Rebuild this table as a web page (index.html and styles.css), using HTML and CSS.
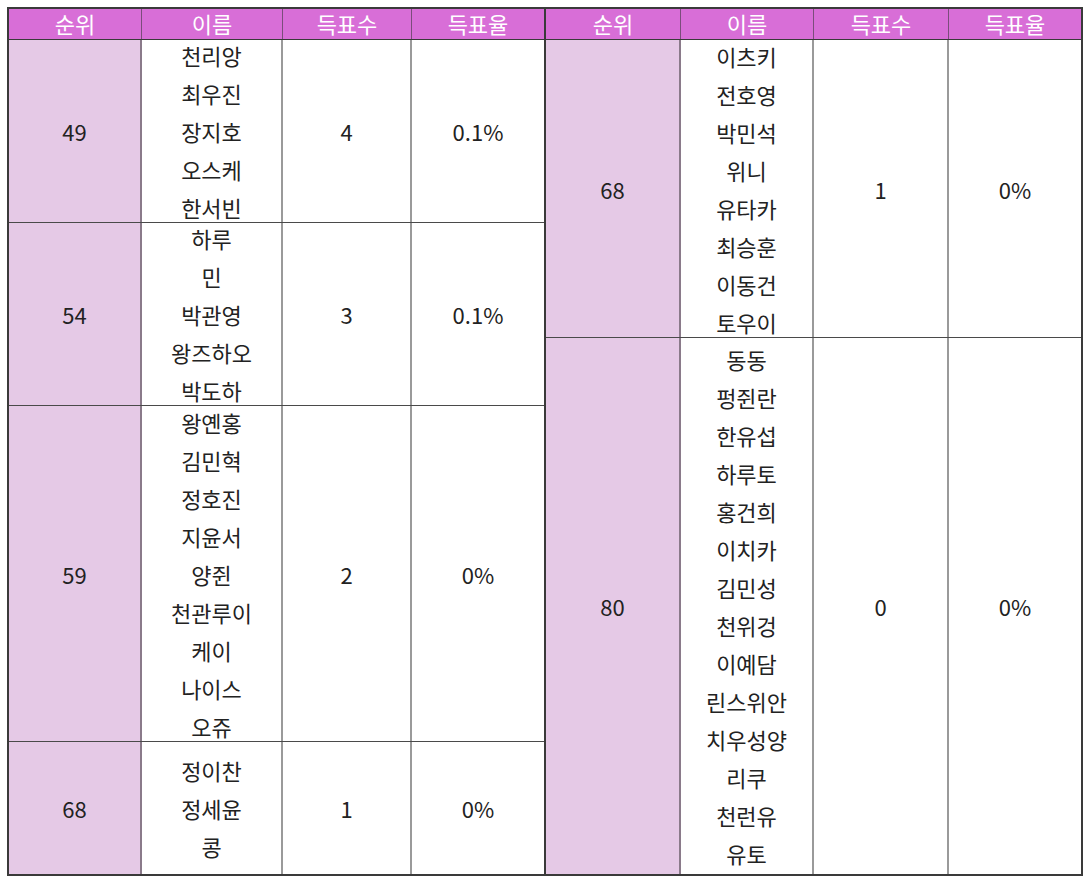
FILE: index.html
```html
<!DOCTYPE html>
<html lang="ko">
<head>
<meta charset="utf-8">
<title>득표 순위</title>
<link rel="stylesheet" href="styles.css">
</head>
<body>
<div class="wrap">
  <div class="tbl tbl-left">
    <div class="row head">
      <div class="cell">순위</div><div class="cell">이름</div><div class="cell">득표수</div><div class="cell">득표율</div>
    </div>
    <div class="row r183">
      <div class="cell rank">49</div>
      <div class="cell names"><div>천리앙</div><div>최우진</div><div>장지호</div><div>오스케</div><div>한서빈</div></div>
      <div class="cell">4</div>
      <div class="cell">0.1%</div>
    </div>
    <div class="row r183">
      <div class="cell rank">54</div>
      <div class="cell names"><div>하루</div><div>민</div><div>박관영</div><div>왕즈하오</div><div>박도하</div></div>
      <div class="cell">3</div>
      <div class="cell">0.1%</div>
    </div>
    <div class="row r336">
      <div class="cell rank">59</div>
      <div class="cell names"><div>왕옌홍</div><div>김민혁</div><div>정호진</div><div>지윤서</div><div>양쥔</div><div>천관루이</div><div>케이</div><div>나이스</div><div>오쥬</div></div>
      <div class="cell">2</div>
      <div class="cell">0%</div>
    </div>
    <div class="row r134 last">
      <div class="cell rank">68</div>
      <div class="cell names"><div>정이찬</div><div>정세윤</div><div>콩</div></div>
      <div class="cell">1</div>
      <div class="cell">0%</div>
    </div>
  </div>
  <div class="tbl tbl-right">
    <div class="row head">
      <div class="cell">순위</div><div class="cell">이름</div><div class="cell">득표수</div><div class="cell">득표율</div>
    </div>
    <div class="row r298">
      <div class="cell rank">68</div>
      <div class="cell names"><div>이츠키</div><div>전호영</div><div>박민석</div><div>위니</div><div>유타카</div><div>최승훈</div><div>이동건</div><div>토우이</div></div>
      <div class="cell">1</div>
      <div class="cell">0%</div>
    </div>
    <div class="row r538 last">
      <div class="cell rank">80</div>
      <div class="cell names"><div>동동</div><div>펑쥔란</div><div>한유섭</div><div>하루토</div><div>홍건희</div><div>이치카</div><div>김민성</div><div>천위겅</div><div>이예담</div><div>린스위안</div><div>치우성양</div><div>리쿠</div><div>천런유</div><div>유토</div></div>
      <div class="cell">0</div>
      <div class="cell">0%</div>
    </div>
  </div>
</div>
</body>
</html>
```
FILE: styles.css
```css
* { box-sizing: border-box; }
html, body { margin: 0; padding: 0; background: #ffffff; }
body {
  font-family: "Noto Sans CJK KR", "Noto Sans", "Liberation Sans", sans-serif;
  font-size: 22px;
  color: #222222;
}
.wrap {
  display: flex;
  padding: 7px 0 0 7px;
}
.tbl {
  display: flex;
  flex-direction: column;
  border: 2px solid #3a3a3a;
}
.tbl-left { width: 539px; }
.tbl-right { width: 537px; border-left: none; }
.row {
  display: grid;
  border-bottom: 1px solid #4a4a4a;
}
.row.last { border-bottom: none; }
.tbl-left .row { grid-template-columns: 133px 141px 129px 1fr; }
.tbl-right .row { grid-template-columns: 135px 133px 135px 1fr; }
.cell {
  display: flex;
  flex-direction: column;
  align-items: center;
  justify-content: center;
  border-right: 2px solid #9a9a9a;
  overflow: visible;
  min-height: 0;
}
.cell:last-child { border-right: none; }
.head {
  height: 31px;
  background: #d86ed7;
  color: #ffffff;
  border-bottom: 1px solid #3a3a3a;
}
.head .cell {
  border-right: 1px solid #7b4d7b;
  line-height: 30px;
  padding-bottom: 2px;
}
.head .cell:last-child { border-right: none; }
.rank { background: #e5c9e6; border-right-color: #8a7a8a; }
.names { line-height: 38px; text-align: center; }
.r183 { height: 183px; }
.r336 { height: 336px; }
.r134 { height: 132px; }
.r298 { height: 298px; }
.r538 { height: 536px; }
```
